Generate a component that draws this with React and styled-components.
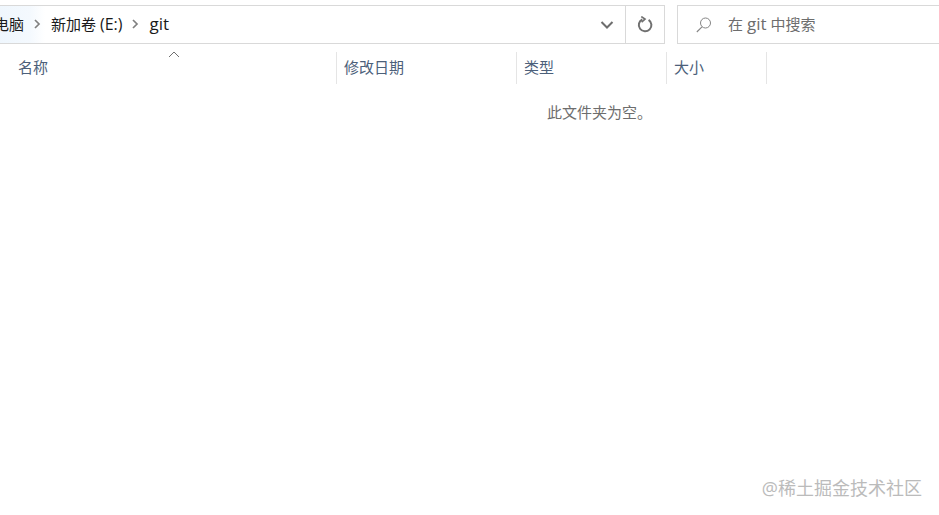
import React from 'react';
import styled, {createGlobalStyle} from 'styled-components';

const GlobalStyle = createGlobalStyle`
  html, body {
    margin: 0;
    padding: 0;
    background: #fff;
    overflow: hidden;
  }
`;

const FONT = `"Open Sans", "Noto Sans CJK SC", sans-serif`;

const columns = [
  {label: '名称', width: 337, inset: 18},
  {label: '修改日期', width: 180, inset: 7},
  {label: '类型', width: 150, inset: 7},
  {label: '大小', width: 100, inset: 7},
];

const Chevron = () => (
  <SeparatorIcon width="10" height="12" viewBox="0 0 10 12">
    <path d="M3 2 L7 6 L3 10" fill="none" stroke="#808080" strokeWidth="1.7" />
  </SeparatorIcon>
);

export default function App() {
  return (
    <Page>
      <GlobalStyle />
      <Toolbar>
        <AddressBar>
          <Crumbs>
            <FirstCrumb>电脑</FirstCrumb>
            <Chevron />
            <Crumb>新加卷 <Latin $size={16}>(E:)</Latin></Crumb>
            <Chevron />
            <Crumb><Latin $size={17}>git</Latin></Crumb>
          </Crumbs>
          <DropButton>
            <svg width="14" height="10" viewBox="0 0 14 10">
              <path d="M1.5 2 L7 7.5 L12.5 2" fill="none" stroke="#6e6e6e" strokeWidth="2" />
            </svg>
          </DropButton>
          <RefreshButton>
            <svg width="18" height="18" viewBox="0 0 18 18">
              <path d="M6.3 3.4 A6.3 6.3 0 1 0 12.6 3.8" fill="none" stroke="#707070" strokeWidth="2" />
              <path d="M5.3 0.6 L9 3.1 L5.6 6.2" fill="none" stroke="#707070" strokeWidth="1.7" />
            </svg>
          </RefreshButton>
        </AddressBar>
        <SearchBox>
          <svg width="18" height="18" viewBox="0 0 18 18">
            <circle cx="10.5" cy="7" r="5" fill="none" stroke="#858585" strokeWidth="1" />
            <path d="M7 10.8 L1.8 16" fill="none" stroke="#858585" strokeWidth="1.1" />
          </svg>
          <SearchText>在 <Latin $size={17}>git</Latin> 中搜索</SearchText>
        </SearchBox>
      </Toolbar>
      <HeaderRow>
        <SortArrow width="12" height="7" viewBox="0 0 12 7">
          <path d="M1 6 L6 1 L11 6" fill="none" stroke="#707070" strokeWidth="1" />
        </SortArrow>
        {columns.map((column) => (
          <HeaderCell key={column.label} $width={column.width} $inset={column.inset}>
            {column.label}
          </HeaderCell>
        ))}
      </HeaderRow>
      <EmptyMessage>此文件夹为空。</EmptyMessage>
      <Watermark>@稀土掘金技术社区</Watermark>
    </Page>
  );
}

const Page = styled.div`
  position: relative;
  width: 939px;
  height: 515px;
  overflow: hidden;
  background: #fff;
  font-family: ${FONT};
`;

const Toolbar = styled.div`
  display: flex;
  gap: 12px;
  padding-top: 5px;
  height: 39px;
`;

const AddressBar = styled.div`
  display: flex;
  align-items: stretch;
  flex: 0 0 665px;
  box-sizing: border-box;
  height: 39px;
  border: 1px solid #d9d9d9;
  border-left: none;
`;

const Crumbs = styled.div`
  display: flex;
  align-items: center;
  flex: 1;
  min-width: 0;
  font-size: 15px;
  color: #1a1a1a;
`;

const Crumb = styled.span`
  line-height: 37px;
  white-space: nowrap;
`;

const Latin = styled.span`
  font-size: ${(p) => p.$size}px;
  line-height: 1;
`;

const FirstCrumb = styled(Crumb)`
  margin-left: -6px;
  padding: 0 21px 0 0;
  margin-right: -21px;
  background: linear-gradient(to right, #eef6fd, #f4f9fe 70%, #fff);
`;

const SeparatorIcon = styled.svg`
  flex: none;
  margin: -2px 9px 0 8px;
  position: relative;
`;

const DropButton = styled.div`
  display: flex;
  align-items: center;
  justify-content: center;
  width: 40px;
  padding-left: 3px;
  box-sizing: border-box;
`;

const RefreshButton = styled.div`
  display: flex;
  align-items: center;
  justify-content: center;
  width: 39px;
  box-sizing: border-box;
  border-left: 1px solid #d9d9d9;
`;

const SearchBox = styled.div`
  display: flex;
  align-items: center;
  flex: 1;
  box-sizing: border-box;
  height: 39px;
  margin-right: -20px;
  padding-left: 17px;
  border: 1px solid #d9d9d9;
`;

const SearchText = styled.span`
  margin-left: 15px;
  margin-top: -2px;
  font-size: 15px;
  color: #6d6d6d;
`;

const HeaderRow = styled.div`
  position: relative;
  display: flex;
  margin-top: 8px;
  height: 32px;
`;

const SortArrow = styled.svg`
  position: absolute;
  left: 168px;
  top: -1px;
`;

const HeaderCell = styled.div`
  flex: 0 0 ${(p) => p.$width}px;
  box-sizing: border-box;
  padding-left: ${(p) => p.$inset}px;
  border-right: 1px solid #e5e5e5;
  font-size: 15px;
  line-height: 31px;
  color: #4c607a;
`;

const EmptyMessage = styled.div`
  margin-top: 16px;
  padding-left: 547px;
  font-size: 15px;
  line-height: 24px;
  color: #6d6d6d;
`;

const Watermark = styled.div`
  position: absolute;
  right: 17px;
  bottom: 15px;
  font-size: 18px;
  line-height: 24px;
  color: #bbb;
`;
